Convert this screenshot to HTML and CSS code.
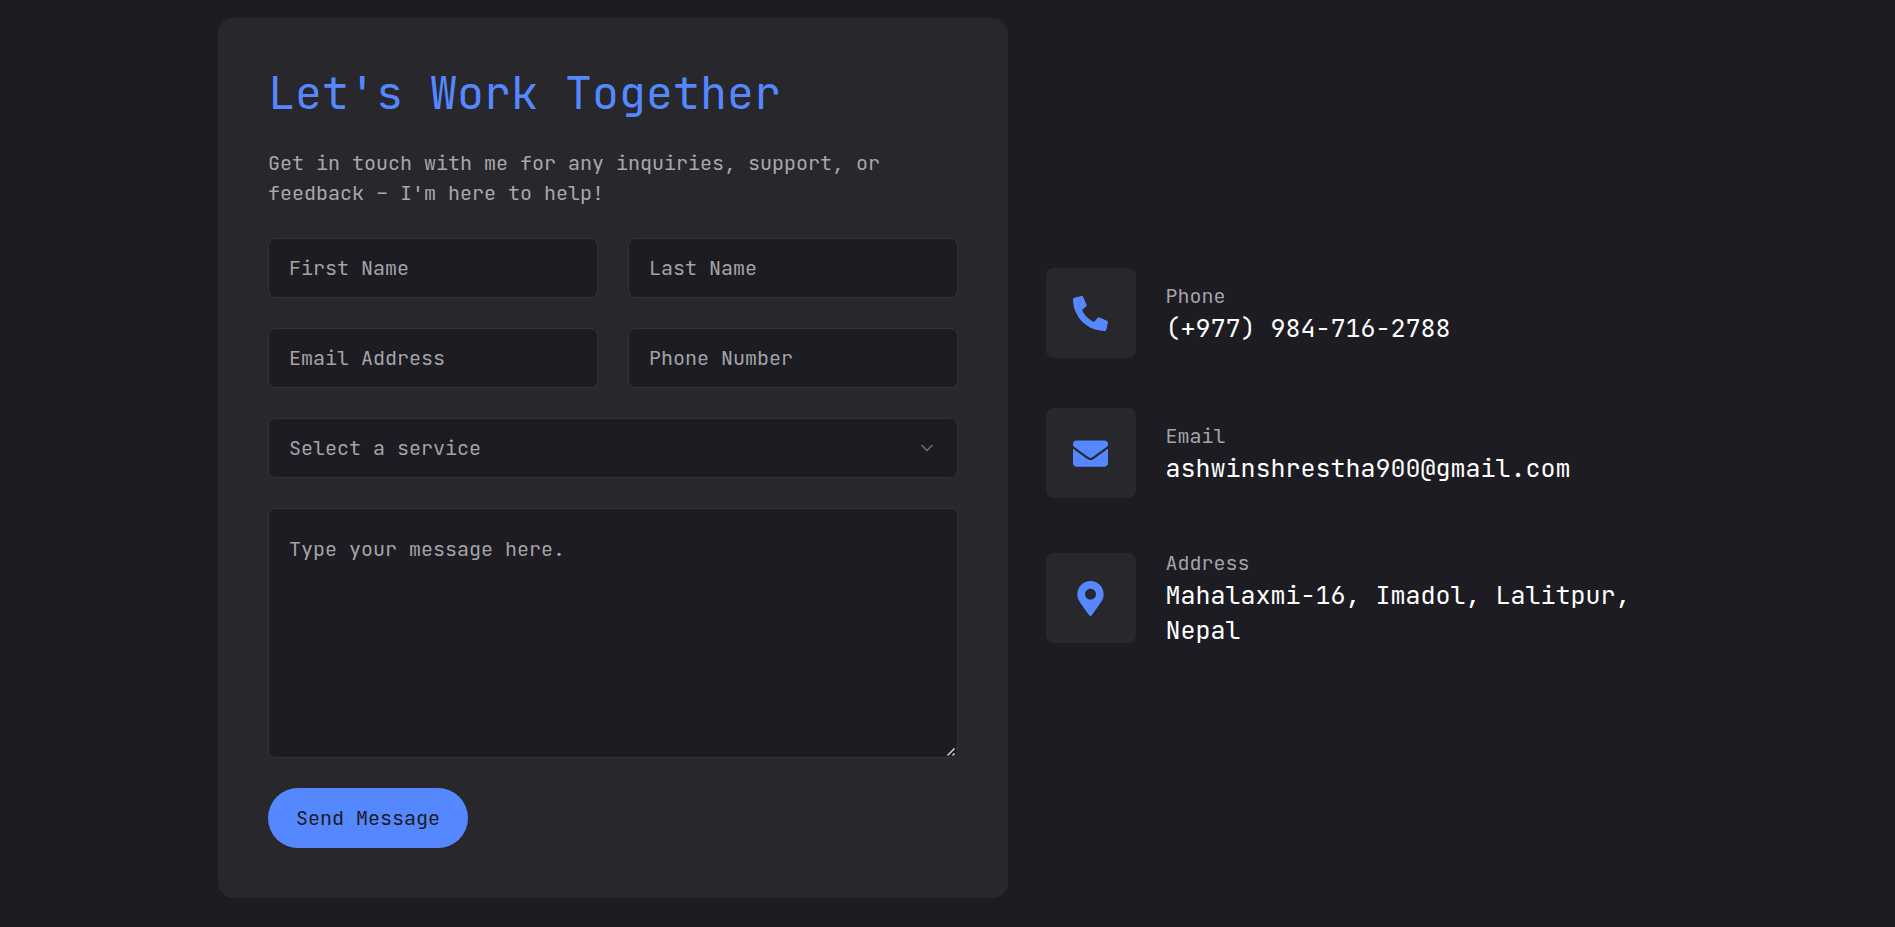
FILE: index.html
```html
<!DOCTYPE html>
<html lang="en">
<head>
<meta charset="utf-8">
<title>Contact</title>
<link rel="stylesheet" href="styles.css">
</head>
<body>
<main class="contact">
  <form class="card">
    <h1 class="title">Let's Work Together</h1>
    <p class="intro">Get in touch with me for any inquiries, support, or feedback – I'm here to help!</p>
    <div class="fields">
      <input class="field" type="text" placeholder="First Name">
      <input class="field" type="text" placeholder="Last Name">
      <input class="field" type="email" placeholder="Email Address">
      <input class="field" type="tel" placeholder="Phone Number">
    </div>
    <button class="field select" type="button">
      <span>Select a service</span>
      <svg class="chevron" viewBox="0 0 24 24"><path d="m6 9 6 6 6-6"/></svg>
    </button>
    <textarea class="field message" placeholder="Type your message here."></textarea>
    <button class="send" type="button">Send Message</button>
  </form>
  <ul class="info">
    <li class="info-item">
      <div class="info-icon"><svg viewBox="0 0 512 512"><path d="M497.39 361.8l-112-48a24 24 0 0 0-28 6.9l-49.6 60.6A370.66 370.66 0 0 1 130.6 204.11l60.6-49.6a23.94 23.94 0 0 0 6.9-28l-48-112A24.16 24.16 0 0 0 122.6.61l-104 24A24 24 0 0 0 0 48c0 256.5 207.9 464 464 464a24 24 0 0 0 23.4-18.6l24-104a24.29 24.29 0 0 0-14.01-27.6z"/></svg></div>
      <div><p class="label">Phone</p><h3 class="value">(+977) 984-716-2788</h3></div>
    </li>
    <li class="info-item">
      <div class="info-icon"><svg viewBox="0 0 512 512"><path d="M502.3 190.8c3.9-3.1 9.7-.2 9.7 4.7V400c0 26.5-21.5 48-48 48H48c-26.5 0-48-21.5-48-48V195.6c0-5 5.7-7.8 9.7-4.7 22.4 17.4 52.1 39.5 154.1 113.6 21.1 15.4 56.7 47.8 92.2 47.6 35.7.3 72-32.8 92.3-47.6 102-74.1 131.6-96.3 154-113.7zM256 320c23.2.4 56.6-29.2 73.4-41.4 132.7-96.3 142.8-104.7 173.4-128.7 5.8-4.5 9.2-11.5 9.2-18.9v-19c0-26.5-21.5-48-48-48H48c-26.5 0-48 21.5-48 48v19c0 7.4 3.4 14.3 9.2 18.9 30.6 23.9 40.7 32.4 173.4 128.7 16.8 12.2 50.2 41.8 73.4 41.4z"/></svg></div>
      <div><p class="label">Email</p><h3 class="value">ashwinshrestha900@gmail.com</h3></div>
    </li>
    <li class="info-item">
      <div class="info-icon"><svg viewBox="0 0 384 512"><path d="M172.268 501.67C26.97 291.031 0 269.413 0 192 0 85.961 85.961 0 192 0s192 85.961 192 192c0 77.413-26.97 99.031-172.268 309.67-9.535 13.774-29.93 13.773-39.464 0zM192 272c44.183 0 80-35.817 80-80s-35.817-80-80-80-80 35.817-80 80 35.817 80 80 80z"/></svg></div>
      <div><p class="label">Address</p><h3 class="value">Mahalaxmi-16, Imadol, Lalitpur, Nepal</h3></div>
    </li>
  </ul>
</main>
</body>
</html>
```
FILE: styles.css
```css
* {
  box-sizing: border-box;
  margin: 0;
  padding: 0;
}

body {
  min-height: 100vh;
  overflow: hidden;
  background: #1c1c22;
  color: #fff;
  font: 20px/30px "JetBrains Mono", "DejaVu Sans Mono", monospace;
}

.contact {
  display: flex;
  align-items: center;
  gap: 37.5px;
  width: 1459px;
  margin: 0 auto;
  padding-top: 18px;
}

.card {
  display: flex;
  flex-direction: column;
  gap: 30px;
  flex: 0 0 790px;
  padding: 50px;
  border-radius: 15px;
  background: #27272c;
}

.title {
  color: #5588ff;
  font-size: 45px;
  font-weight: 400;
  line-height: 50px;
}

.intro {
  color: #a9a9ab;
}

.fields {
  display: grid;
  grid-template-columns: 1fr 1fr;
  gap: 30px;
}

.field {
  width: 100%;
  height: 60px;
  padding: 0 20px;
  border: 1px solid #333338;
  border-radius: 7.5px;
  outline: none;
  background: #1c1c22;
  color: #fff;
  font: inherit;
}

.field::placeholder {
  color: #a4a4a7;
}

.select {
  display: flex;
  align-items: center;
  justify-content: space-between;
  color: #a4a4a7;
}

.chevron {
  width: 20px;
  height: 20px;
  fill: none;
  stroke: #6c6c70;
  stroke-width: 2;
  stroke-linecap: round;
  stroke-linejoin: round;
}

.message {
  display: block;
  height: 250px;
  padding: 25px 20px;
  resize: vertical;
}

.message::-webkit-resizer {
  background: url("data:image/svg+xml,%3Csvg xmlns='http://www.w3.org/2000/svg' width='15' height='15'%3E%3Cpath d='M5.5 13.5l7-7M10.5 13.5l2-2' stroke='%23c8c8cc' stroke-width='1.6'/%3E%3C/svg%3E") right bottom / 15px 15px no-repeat;
}

.send {
  align-self: flex-start;
  width: 200px;
  height: 60px;
  border: 0;
  border-radius: 30px;
  background: #5588ff;
  color: #1c1c22;
  font: inherit;
}

.info {
  display: flex;
  flex: 1;
  flex-direction: column;
  gap: 50px;
  list-style: none;
}

.info-item {
  display: flex;
  align-items: center;
  gap: 30px;
}

.info-icon {
  display: flex;
  align-items: center;
  justify-content: center;
  flex: 0 0 90px;
  height: 90px;
  border-radius: 7.5px;
  background: #27272c;
}

.info-icon svg {
  width: 35px;
  height: 35px;
  margin-right: 1px;
  fill: #5588ff;
}

.label {
  color: #a4a4a7;
}

.value {
  font-size: 25px;
  font-weight: 400;
  line-height: 35px;
}
```
